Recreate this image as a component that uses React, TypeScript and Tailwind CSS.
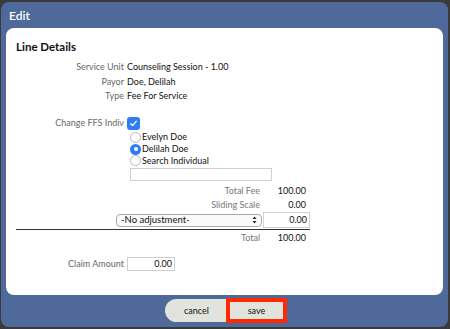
import React from "react";

const Row: React.FC<{ label: string; h: string; children?: React.ReactNode }> = ({ label, h, children }) => (
  <div className={`flex items-center ${h}`}>
    <div className="w-[111px] text-right text-[#666] pr-[3px]">{label}</div>
    <div className="text-[#111]">{children}</div>
  </div>
);

const Radio: React.FC<{ label: string; checked?: boolean; h: string }> = ({ label, checked, h }) => (
  <div className={`flex items-center pl-[114px] ${h}`}>
    {checked ? (
      <span className="w-[11px] h-[11px] rounded-full bg-[#2f7cf6] flex items-center justify-center">
        <span className="w-[4px] h-[4px] rounded-full bg-white" />
      </span>
    ) : (
      <span className="w-[11px] h-[11px] rounded-full border border-[#b5b5b5] bg-white" />
    )}
    <span className="ml-[1px] text-[9px] text-[#111]">{label}</span>
  </div>
);

const TotalRow: React.FC<{ label: string; value: string }> = ({ label, value }) => (
  <div className="flex items-center w-[294px] h-[14px]">
    <div className="flex-1 text-right text-[#777]">{label}</div>
    <div className="w-[50px] pr-[4px] text-right text-[#111]">{value}</div>
  </div>
);

export default function App() {
  return (
    <div
      className="w-[450px] h-[329px] bg-[#3a3a3a] pt-[2px] pl-[1px] overflow-hidden text-[9px]"
      style={{ fontFamily: "Lato, 'Open Sans', sans-serif" }}
    >
      <div className="w-[447px] h-[325px] bg-[#4f6a9a] rounded-[8px] flex flex-col px-[5px]">
        {/* title */}
        <div className="h-[26px] flex items-center pl-[3px] pt-[1px] text-white text-[12px] font-semibold">
          Edit
        </div>

        {/* panel */}
        <div className="h-[267px] bg-white rounded-[8px] pl-[10px] pt-[10px]">
          <div className="h-[18px] flex items-center text-[11.5px] font-bold text-[#111]">Line Details</div>
          <div className="mt-[4px]">
            <Row label="Service Unit" h="h-[14px]">Counseling Session - 1.00</Row>
            <Row label="Payor" h="h-[15px]">Doe, Delilah</Row>
            <Row label="Type" h="h-[14px]">Fee For Service</Row>
          </div>

          <div className="mt-[13px] flex items-center h-[14px]">
            <div className="w-[111px] text-right text-[#666] pr-[3px]">Change FFS Indiv</div>
            <span className="w-[13px] h-[13px] rounded-[3px] bg-[#2f7cf6] flex items-center justify-center">
              <svg width="9" height="9" viewBox="0 0 10 10" fill="none">
                <path d="M2 5.3l2 2L8 2.6" stroke="white" strokeWidth="1.5" strokeLinecap="round" strokeLinejoin="round" />
              </svg>
            </span>
          </div>

          <div className="mt-[1px]">
            <Radio label="Evelyn Doe" h="h-[12px]" />
            <Radio label="Delilah Doe" checked h="h-[12px]" />
            <Radio label="Search Individual" h="h-[11px]" />
          </div>

          <div className="ml-[114px] mt-[2px] w-[142px] h-[13px] border border-[#cfcfcf]" />

          <div className="mt-[3px]">
            <TotalRow label="Total Fee" value="100.00" />
            <TotalRow label="Sliding Scale" value="0.00" />
          </div>

          <div className="w-[294px] border-b border-[#333]">
            <div className="flex items-center justify-end h-[17px] pb-[1px]">
              <div className="w-[146px] h-[13px] rounded-[4px] border border-[#a9a9a9] bg-[#fafafa] flex items-center justify-between pl-[4px] pr-[4px] text-[9.5px] text-[#111]">
                <span>-No adjustment-</span>
                <svg width="5" height="8" viewBox="0 0 5 8">
                  <path d="M2.5 0.5L4.5 3H0.5z" fill="#222" />
                  <path d="M2.5 7.5L4.5 5H0.5z" fill="#222" />
                </svg>
              </div>
              <div className="ml-[1px] w-[47px] h-[16px] border border-[#d0d0d0] flex items-center justify-end pr-[2px] text-[#111]">
                0.00
              </div>
            </div>
          </div>

          <div className="mt-[1px]">
            <TotalRow label="Total" value="100.00" />
          </div>

          <div className="mt-[12px] flex items-center h-[14px]">
            <div className="w-[111px] text-right text-[#666] pr-[3px]">Claim Amount</div>
            <div className="w-[48px] h-[14px] border border-[#cfcfcf] flex items-center justify-end pr-[2px] text-[#111]">
              0.00
            </div>
          </div>
        </div>

        {/* footer */}
        <div className="flex items-start justify-center pt-[3px] pl-[3px]">
          <button className="mt-[1px] w-[63px] h-[23px] rounded-l-[12px] bg-[#e3e3de] text-[9px] text-[#111]">
            cancel
          </button>
          <button className="-ml-[2px] w-[61px] h-[25px] border-[4px] border-[#ff2a00] bg-[#e3e3de] text-[9px] text-[#111]">
            save
          </button>
        </div>
      </div>
    </div>
  );
}
